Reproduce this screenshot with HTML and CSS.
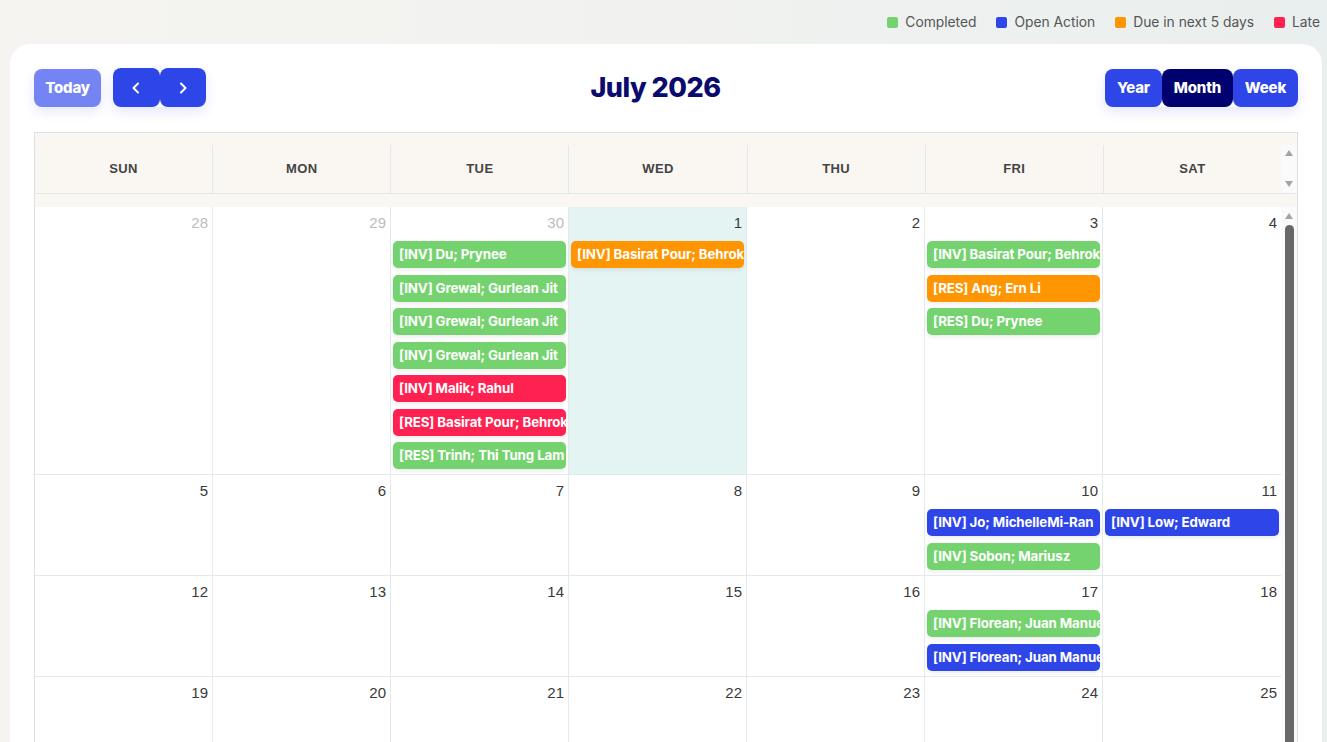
FILE: index.html
```html
<!DOCTYPE html>
<html>
	<head>
		<meta charset="UTF-8">
		<title>Calendar</title>
		<link rel="stylesheet" href="styles.css">
	</head>
	<body>
		<div class="legend">
			<span class="legend-item"><i class="dot green"></i>Completed</span>
			<span class="legend-item"><i class="dot blue"></i>Open Action</span>
			<span class="legend-item"><i class="dot orange"></i>Due in next 5 days</span>
			<span class="legend-item"><i class="dot red"></i>Late</span>
		</div>
		<div class="card">
			<div class="toolbar">
				<div class="btn-group">
					<button class="btn btn-today">Today</button>
					<div class="joined">
						<button class="btn btn-arrow">
							<svg width="14" height="14" viewBox="0 0 14 14"><path d="M9 2.5 4.5 7 9 11.5" fill="none" stroke="#fff" stroke-width="2" stroke-linecap="round" stroke-linejoin="round"/></svg>
						</button>
						<button class="btn btn-arrow">
							<svg width="14" height="14" viewBox="0 0 14 14"><path d="M5 2.5 9.5 7 5 11.5" fill="none" stroke="#fff" stroke-width="2" stroke-linecap="round" stroke-linejoin="round"/></svg>
						</button>
					</div>
				</div>
				<h1 class="title">July 2026</h1>
				<div class="joined">
					<button class="btn btn-view">Year</button>
					<button class="btn btn-view active">Month</button>
					<button class="btn btn-view">Week</button>
				</div>
			</div>

			<div class="calendar">
				<div class="cal-head">
					<div class="head-row">
						<div class="head-cell">SUN</div>
						<div class="head-cell">MON</div>
						<div class="head-cell">TUE</div>
						<div class="head-cell">WED</div>
						<div class="head-cell">THU</div>
						<div class="head-cell">FRI</div>
						<div class="head-cell">SAT</div>
						<div class="head-scroll">
							<i class="arrow-up"></i>
							<i class="arrow-down"></i>
						</div>
					</div>
				</div>
				<div class="cal-body">
					<div class="weeks" id="weeks"></div>
					<div class="scrollbar">
						<i class="arrow-up"></i>
						<div class="thumb"></div>
					</div>
				</div>
			</div>
		</div>
		<script type="text/javascript">
			// c = completed, o = open, d = due soon, l = late
			var weeks = [
				[[28,1],[29,1],[30,1,[
					['c','[INV] Du; Prynee'],
					['c','[INV] Grewal; Gurlean Jit'],
					['c','[INV] Grewal; Gurlean Jit'],
					['c','[INV] Grewal; Gurlean Jit'],
					['l','[INV] Malik; Rahul'],
					['l','[RES] Basirat Pour; Behrokh'],
					['c','[RES] Trinh; Thi Tung Lam']
				]],[1,0,[['d','[INV] Basirat Pour; Behrokh']],1],[2],[3,0,[
					['c','[INV] Basirat Pour; Behrokh'],
					['d','[RES] Ang; Ern Li'],
					['c','[RES] Du; Prynee']
				]],[4]],
				[[5],[6],[7],[8],[9],[10,0,[
					['o','[INV] Jo; MichelleMi-Ran'],
					['c','[INV] Sobon; Mariusz']
				]],[11,0,[['o','[INV] Low; Edward']]]],
				[[12],[13],[14],[15],[16],[17,0,[
					['c','[INV] Florean; Juan Manuel'],
					['o','[INV] Florean; Juan Manuel']
				]],[18]],
				[[19],[20],[21],[22],[23],[24],[25]]
			];
			var colors = {c:'green', o:'blue', d:'orange', l:'red'};
			var str = '';
			for(var i=0;i<weeks.length;i++){
				str += '<div class="week">';
				for(var j=0;j<weeks[i].length;j++){
					var d = weeks[i][j];
					var cls = 'day';
					if(d[1]) cls += ' other';
					if(d[3]) cls += ' today';
					str += '<div class="'+cls+'"><div class="num">'+d[0]+'</div>';
					var evs = d[2] || [];
					for(var k=0;k<evs.length;k++){
						str += '<div class="event '+colors[evs[k][0]]+'">'+evs[k][1]+'</div>';
					}
					str += '</div>';
				}
				str += '</div>';
			}
			document.getElementById('weeks').innerHTML = str;
		</script>
	</body>
</html>
```

FILE: styles.css
```css
html, body{
	margin: 0;
	height: 100%;
	overflow: hidden;
}
body{
	background: linear-gradient(90deg, #f5f4f0 0%, #f1f2f0 50%, #e9efee 100%);
	font-family: "Inter", "Liberation Sans", sans-serif;
	color: #333;
}
.legend{
	height: 44px;
	display: flex;
	justify-content: flex-end;
	align-items: center;
	gap: 20px;
	padding-right: 7px;
	font-size: 13.8px;
	color: #555;
}
.legend-item{
	display: flex;
	align-items: center;
	gap: 7px;
}
.dot{
	width: 11px;
	height: 11px;
	border-radius: 2px;
	display: inline-block;
}
.dot.green, .event.green{ background-color: #74d36e; }
.dot.blue, .event.blue{ background-color: #2e46e8; }
.dot.orange, .event.orange{ background-color: #ff9500; }
.dot.red, .event.red{ background-color: #ff2150; }

.card{
	margin: 0 5px 0 10px;
	background: #fff;
	border-radius: 20px 20px 0 0;
	padding: 24px 24px 0;
	height: 800px;
}
.toolbar{
	display: flex;
	justify-content: space-between;
	align-items: center;
	height: 39px;
	margin-bottom: 25px;
}
.btn-group{
	display: flex;
	align-items: center;
	gap: 12px;
}
.joined{
	display: flex;
	box-shadow: 0 5px 12px rgba(46, 70, 232, 0.13);
	border-radius: 8px;
}
.btn{
	border: none;
	border-radius: 8px;
	color: #fff;
	font-family: "Inter", "Liberation Sans", sans-serif;
	font-weight: 800;
	font-size: 15px;
	letter-spacing: -0.2px;
	height: 38px;
	padding: 0;
	cursor: pointer;
	display: flex;
	align-items: center;
	justify-content: center;
}
.btn-today{
	width: 67px;
	background-color: #7584f3;
	box-shadow: 0 5px 12px rgba(46, 70, 232, 0.12);
}
.btn-arrow{
	width: 46.5px;
	height: 39px;
	background-color: #2e46e8;
}
.btn-view{
	background-color: #2e46e8;
	padding: 0 11px;
	height: 38px;
}
.btn-view:first-child{ width: 57px; }
.btn-view.active{
	background-color: #00006f;
	width: 71px;
}
.btn-view:last-child{ width: 65px; }
.title{
	margin: 0;
	font-size: 27px;
	font-weight: 800;
	color: #0b0b6f;
	letter-spacing: -0.5px;
}

.calendar{
	border: 1px solid #dfdfdf;
	border-bottom: none;
}
.cal-head{
	background-color: #faf6f2;
	padding: 12px 0 13px;
}
.head-row{
	display: flex;
	height: 49px;
	border-bottom: 1px solid #e3e8e8;
	box-sizing: border-box;
}
.head-cell{
	flex: 1;
	border-right: 1px solid #e3e8e8;
	display: flex;
	align-items: center;
	justify-content: center;
	padding-bottom: 1px;
	font-family: "Liberation Sans", Arial, sans-serif;
	font-weight: bold;
	font-size: 13px;
	color: #444;
	letter-spacing: 0.4px;
}
.head-cell:nth-child(7){ border-right: none; }
.head-scroll{
	width: 16px;
	background: #fafafa;
	display: flex;
	flex-direction: column;
	justify-content: space-between;
	align-items: center;
	padding: 5px 0 6px;
	box-sizing: border-box;
}
.arrow-up, .arrow-down{
	width: 0;
	height: 0;
	border-left: 4.5px solid transparent;
	border-right: 4.5px solid transparent;
	display: block;
}
.arrow-up{ border-bottom: 6px solid #a3a3a3; }
.arrow-down{ border-top: 6px solid #a3a3a3; }

.cal-body{
	display: flex;
}
.weeks{
	flex: 1;
}
.week{
	display: grid;
	grid-template-columns: repeat(7, 1fr);
	border-bottom: 1px solid #e3eaea;
}
.day{
	border-right: 1px solid #e3eaea;
	min-height: 95px;
	padding-bottom: 5px;
	box-sizing: content-box;
	overflow: hidden;
}
.day:last-child{ border-right: none; }
.day.today{ background-color: #e4f4f3; }
.num{
	height: 34px;
	box-sizing: border-box;
	padding: 7px 4px 0 0;
	line-height: 18px;
	text-align: right;
	font-family: "Liberation Sans", Arial, sans-serif;
	font-size: 15px;
	color: #3a3a3a;
}
.day.other .num{ color: #bdbdbd; }
.event{
	height: 27px;
	line-height: 27px;
	margin: 0 2px 6.5px 2px;
	padding-left: 6px;
	border-radius: 5px;
	color: #fff;
	font-weight: 700;
	font-size: 13.3px;
	letter-spacing: -0.1px;
	white-space: nowrap;
	overflow: hidden;
	box-shadow: 0 2px 4px rgba(0, 0, 0, 0.08);
}
.event:last-child{ margin-bottom: 0; }
.scrollbar{
	width: 16px;
	background: #fafafa;
	display: flex;
	flex-direction: column;
	align-items: center;
	padding-top: 6px;
	box-sizing: border-box;
}
.thumb{
	margin-top: 6px;
	width: 9px;
	height: 600px;
	background-color: #686868;
	border-radius: 5px 5px 0 0;
}
```
